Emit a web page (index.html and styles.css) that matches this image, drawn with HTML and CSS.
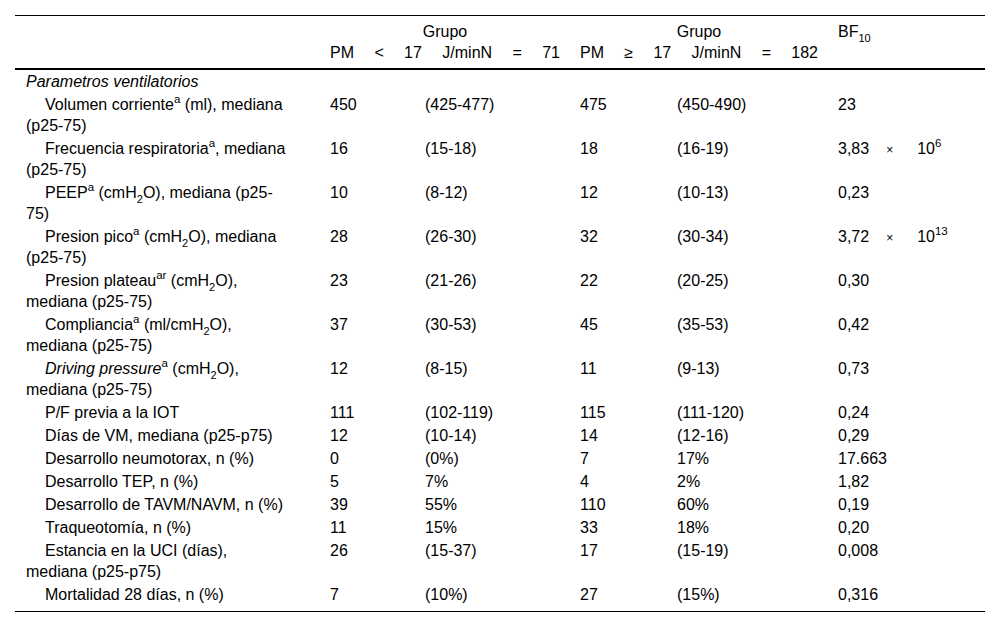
FILE: index.html
```html
<!DOCTYPE html>
<html lang="es">
<head>
<meta charset="utf-8">
<title>Parametros ventilatorios</title>
<link rel="stylesheet" href="styles.css">
</head>
<body>
<div class="wrap">
<table class="data">
  <colgroup>
    <col class="c1"><col class="c2"><col class="c3"><col class="c4"><col class="c5"><col class="c6">
  </colgroup>
  <thead>
    <tr>
      <th></th>
      <th colspan="2"><div class="grp">Grupo</div><div class="just">PM &lt; 17 J/minN = 71</div></th>
      <th colspan="2"><div class="grp">Grupo</div><div class="just">PM ≥ 17 J/minN = 182</div></th>
      <th class="bf">BF<sub>10</sub></th>
    </tr>
  </thead>
  <tbody>
    <tr><td class="lbl sec"><em>Parametros ventilatorios</em></td><td></td><td></td><td></td><td></td><td></td></tr>
    <tr><td class="lbl in">Volumen corriente<sup>a</sup> (ml), mediana<br>(p25-75)</td><td>450</td><td>(425-477)</td><td>475</td><td>(450-490)</td><td>23</td></tr>
    <tr><td class="lbl in">Frecuencia respiratoria<sup>a</sup>, mediana<br>(p25-75)</td><td>16</td><td>(15-18)</td><td>18</td><td>(16-19)</td><td>3,83<span class="x">×</span><span class="pw">10<sup>6</sup></span></td></tr>
    <tr><td class="lbl in">PEEP<sup>a</sup> (cmH<sub>2</sub>O), mediana (p25-<br>75)</td><td>10</td><td>(8-12)</td><td>12</td><td>(10-13)</td><td>0,23</td></tr>
    <tr><td class="lbl in">Presion pico<sup>a</sup> (cmH<sub>2</sub>O), mediana<br>(p25-75)</td><td>28</td><td>(26-30)</td><td>32</td><td>(30-34)</td><td>3,72<span class="x">×</span><span class="pw">10<sup>13</sup></span></td></tr>
    <tr><td class="lbl in">Presion plateau<sup>ar</sup> (cmH<sub>2</sub>O),<br>mediana (p25-75)</td><td>23</td><td>(21-26)</td><td>22</td><td>(20-25)</td><td>0,30</td></tr>
    <tr><td class="lbl in">Compliancia<sup>a</sup> (ml/cmH<sub>2</sub>O),<br>mediana (p25-75)</td><td>37</td><td>(30-53)</td><td>45</td><td>(35-53)</td><td>0,42</td></tr>
    <tr><td class="lbl in"><em>Driving pressure</em><sup>a</sup> (cmH<sub>2</sub>O),<br>mediana (p25-75)</td><td>12</td><td>(8-15)</td><td>11</td><td>(9-13)</td><td>0,73</td></tr>
    <tr><td class="lbl in">P/F previa a la IOT</td><td>111</td><td>(102-119)</td><td>115</td><td>(111-120)</td><td>0,24</td></tr>
    <tr><td class="lbl in">Días de VM, mediana (p25-p75)</td><td>12</td><td>(10-14)</td><td>14</td><td>(12-16)</td><td>0,29</td></tr>
    <tr><td class="lbl in">Desarrollo neumotorax, n (%)</td><td>0</td><td>(0%)</td><td>7</td><td>17%</td><td>17.663</td></tr>
    <tr><td class="lbl in">Desarrollo TEP, n (%)</td><td>5</td><td>7%</td><td>4</td><td>2%</td><td>1,82</td></tr>
    <tr><td class="lbl in">Desarrollo de TAVM/NAVM, n (%)</td><td>39</td><td>55%</td><td>110</td><td>60%</td><td>0,19</td></tr>
    <tr><td class="lbl in">Traqueotomía, n (%)</td><td>11</td><td>15%</td><td>33</td><td>18%</td><td>0,20</td></tr>
    <tr><td class="lbl in">Estancia en la UCI (días),<br>mediana (p25-p75)</td><td>26</td><td>(15-37)</td><td>17</td><td>(15-19)</td><td>0,008</td></tr>
    <tr class="last"><td class="lbl in">Mortalidad 28 días, n (%)</td><td>7</td><td>(10%)</td><td>27</td><td>(15%)</td><td>0,316</td></tr>
  </tbody>
</table>
</div>
</body>
</html>
```

FILE: styles.css
```css
html, body {
  margin: 0;
  padding: 0;
  background: #fff;
}
body {
  font-family: "Liberation Sans", Arial, sans-serif;
  font-size: 16px;
  color: #000;
}
.wrap {
  padding: 15px 15px 0 15px;
}
.data {
  width: 970px;
  border-collapse: collapse;
  table-layout: fixed;
  line-height: 21px;
}
.c1 { width: 305px; }
.c2 { width: 95px; }
.c3 { width: 155px; }
.c4 { width: 97px; }
.c5 { width: 161px; }
.c6 { width: 157px; }

.data thead tr {
  border-top: 1px solid #000;
  border-bottom: 2px solid #000;
}
.data th {
  font-weight: normal;
  vertical-align: top;
  padding: 5px 10px 5px 10px;
  text-align: left;
}
.grp {
  text-align: center;
}
.just {
  text-align: justify;
  text-align-last: justify;
}
.data sub {
  font-size: 11px;
  line-height: 0;
  vertical-align: -5px;
}
.data sup {
  font-size: 11.5px;
  line-height: 0;
  vertical-align: 7px;
}
.data tbody tr.last {
  border-bottom: 1px solid #000;
}
.data td {
  vertical-align: top;
  padding: 1px 10px 1px 10px;
  text-align: left;
}
.data tr.last td {
  padding-bottom: 6px;
}
.data td.lbl {
  padding-left: 11px;
  white-space: nowrap;
}
.lbl.in {
  text-indent: 19px;
}
.sec {
  padding-top: 3px;
}
.x {
  display: inline-block;
  font-size: 12px;
  margin: 0 0 0 17px;
}
.pw {
  display: inline-block;
  margin-left: 24px;
}
```
